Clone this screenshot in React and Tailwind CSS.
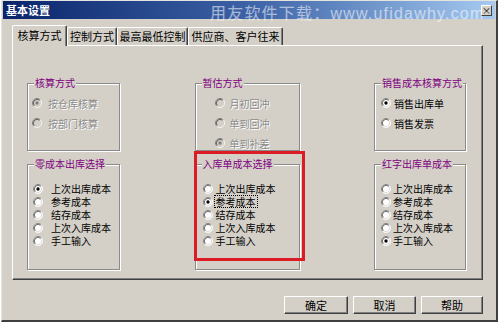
import React from "react";

const FONT = { fontFamily: '"Noto Sans CJK SC", "Noto Sans", sans-serif' };

function Radio({ checked, disabled }) {
  return (
    <svg width="10" height="10" viewBox="0 0 12 12" className="shrink-0">
      <circle cx="6" cy="6" r="5.5" fill={disabled ? "#d4d0c8" : "#ffffff"} />
      <path d="M2.11 9.89 A5.5 5.5 0 0 1 9.89 2.11" fill="none" stroke="#808080" strokeWidth="1" />
      <path d="M9.89 2.11 A5.5 5.5 0 0 1 2.11 9.89" fill="none" stroke="#ffffff" strokeWidth="1" />
      <path d="M2.82 9.18 A4.5 4.5 0 0 1 9.18 2.82" fill="none" stroke="#404040" strokeWidth="1" />
      <path d="M9.18 2.82 A4.5 4.5 0 0 1 2.82 9.18" fill="none" stroke="#d4d0c8" strokeWidth="1" />
      {checked && <circle cx="6" cy="6" r="2" fill={disabled ? "#808080" : "#000000"} />}
    </svg>
  );
}

function Item({ label, checked, disabled, h, gap, focus }) {
  return (
    <div className={`flex items-center ${h} ${gap}`}>
      <Radio checked={checked} disabled={disabled} />
      <span
        className={`text-[10px] leading-[11px] whitespace-nowrap ${
          disabled ? "text-[#8c8c8c] [text-shadow:1px_1px_0_#ffffff]" : "text-black"
        } ${focus ? "border border-dotted border-black px-[1px] -ml-[2px]" : ""}`}
      >
        {label}
      </span>
    </div>
  );
}

function Group({ title, children, pad }) {
  return (
    <fieldset className="h-full min-w-0 border border-[#8a8a8a] shadow-[inset_1px_1px_0_#ffffff,1px_1px_0_#ffffff]">
      <legend className="ml-[6px] px-[1px] bg-[#d4d0c8] text-[10px] leading-[12px] text-[#800080] whitespace-nowrap">
        {title}
      </legend>
      <div className={`flex flex-col ${pad}`}>{children}</div>
    </fieldset>
  );
}

function Tab({ label, w, selected }) {
  return (
    <div
      className={`${w} flex items-center justify-center text-[11px] text-black whitespace-nowrap border-l border-t border-white border-r border-r-[#404040] rounded-t-[2px] shadow-[inset_-1px_0_0_#808080] bg-[#d4d0c8] ${
        selected ? "h-[21px] -mb-px relative z-10 pb-[1px]" : "h-[18px]"
      }`}
    >
      {label}
    </div>
  );
}

function Btn({ label, w }) {
  return (
    <div
      className={`${w} h-[18px] flex items-center justify-center text-[11px] text-black bg-[#d4d0c8] border border-t-white border-l-white border-r-[#404040] border-b-[#404040] shadow-[inset_-1px_-1px_0_#808080]`}
    >
      {label}
    </div>
  );
}

export default function App() {
  const row1 = "h-[20px]";
  const row2 = "h-[13px]";
  return (
    <div className="w-[500px] h-[327px] bg-white overflow-hidden" style={FONT}>
      <div className="ml-px w-[497px] h-[322px] bg-[#d4d0c8] border-l border-t border-l-[#e6e4de] border-t-[#e6e4de] border-r-2 border-b-2 border-r-[#404040] border-b-[#404040] flex flex-col">
        {/* title bar */}
        <div className="relative mx-px h-[18px] flex items-center bg-gradient-to-r from-[#0a246a] via-[#3d62a6] to-[#a6caf0]">
          <span className="pl-[3px] text-[11px] font-bold text-white leading-none">基本设置</span>
          <span className="absolute left-[207px] top-[2px] text-[16px] leading-[18px] text-white/55 whitespace-nowrap tracking-[1.2px]">
            用友软件下载：<span style={{ fontFamily: '"Liberation Sans", sans-serif' }}>www.ufidawhy.com</span>
          </span>
          <div className="ml-auto mr-[3px] relative z-10 w-[11px] h-[11px] bg-[#d4d0c8] border border-t-white border-l-white border-r-[#404040] border-b-[#404040] flex items-center justify-center text-[9px] leading-none text-black">
            ×
          </div>
        </div>

        {/* tabs */}
        <div className="mt-[6px] ml-[10px] flex items-end">
          <Tab label="核算方式" w="w-[55px]" selected />
          <Tab label="控制方式" w="w-[50px]" />
          <Tab label="最高最低控制" w="w-[71px]" />
          <Tab label="供应商、客户往来" w="w-[95px]" />
        </div>

        {/* panel */}
        <div className="ml-[10px] w-[471px] h-[235px] border-l border-t border-white border-r border-b border-r-[#404040] border-b-[#404040] shadow-[inset_-1px_-1px_0_#808080] pt-[31px] pl-[14px] pr-[16px] pb-[9px]">
          <div className="grid grid-cols-[93px_105px_92px] grid-rows-[74px_112px] gap-y-[7px] justify-between h-full">
            <Group title="核算方式" pad="pt-[4px] pl-[4px]">
              <Item label="按仓库核算" checked disabled h={row1} gap="gap-[6px]" />
              <Item label="按部门核算" disabled h={row1} gap="gap-[6px]" />
            </Group>
            <Group title="暂估方式" pad="pt-[4px] pl-[19px]">
              <Item label="月初回冲" disabled h={row1} gap="gap-[5px]" />
              <Item label="单到回冲" disabled h={row1} gap="gap-[5px]" />
              <Item label="单到补差" checked disabled h={row1} gap="gap-[5px]" />
            </Group>
            <Group title="销售成本核算方式" pad="pt-[4px] pl-[6px]">
              <Item label="销售出库单" checked h={row1} gap="gap-[3px]" />
              <Item label="销售发票" h={row1} gap="gap-[3px]" />
            </Group>

            <Group title="零成本出库选择" pad="pt-[12px] pl-[5px]">
              <Item label="上次出库成本" checked h={row2} gap="gap-[8px]" />
              <Item label="参考成本" h={row2} gap="gap-[8px]" />
              <Item label="结存成本" h={row2} gap="gap-[8px]" />
              <Item label="上次入库成本" h={row2} gap="gap-[8px]" />
              <Item label="手工输入" h={row2} gap="gap-[8px]" />
            </Group>
            <div className="relative h-full">
              <Group title="入库单成本选择" pad="pt-[12px] pl-[7px]">
                <Item label="上次出库成本" h={row2} gap="gap-[3px]" />
                <Item label="参考成本" checked h={row2} gap="gap-[3px]" focus />
                <Item label="结存成本" h={row2} gap="gap-[3px]" />
                <Item label="上次入库成本" h={row2} gap="gap-[3px]" />
                <Item label="手工输入" h={row2} gap="gap-[3px]" />
              </Group>
              <div className="absolute left-[-1px] top-[-7px] w-[111px] h-[110px] border-[3px] border-[#dc1c24] pointer-events-none" />
            </div>
            <Group title="红字出库单成本" pad="pt-[12px] pl-[6px]">
              <Item label="上次出库成本" h={row2} gap="gap-[2px]" />
              <Item label="参考成本" h={row2} gap="gap-[2px]" />
              <Item label="结存成本" h={row2} gap="gap-[2px]" />
              <Item label="上次入库成本" h={row2} gap="gap-[2px]" />
              <Item label="手工输入" checked h={row2} gap="gap-[2px]" />
            </Group>
          </div>
        </div>

        {/* buttons */}
        <div className="mt-[16px] pr-[13px] flex justify-end gap-[5px]">
          <Btn label="确定" w="w-[64px]" />
          <Btn label="取消" w="w-[63px]" />
          <Btn label="帮助" w="w-[62px]" />
        </div>
      </div>
    </div>
  );
}
